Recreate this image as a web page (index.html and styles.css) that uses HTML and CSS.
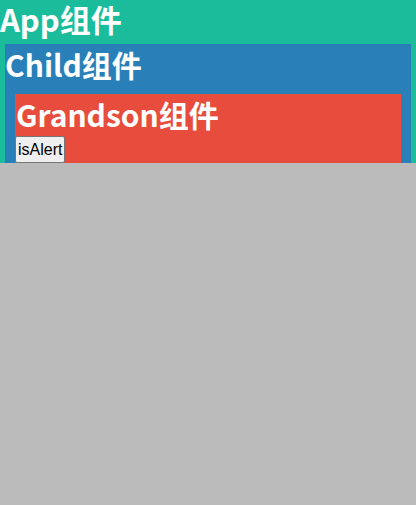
FILE: index.html
```html
<!DOCTYPE html>
<html>
<head>
<meta charset="utf-8">
<link rel="stylesheet" href="styles.css">
</head>
<body>
<div class="app">
  <h1 class="title app-title">App组件</h1>
  <div class="child">
    <h1 class="title">Child组件</h1>
    <div class="grandson">
      <h1 class="title">Grandson组件</h1>
      <button class="btn">isAlert</button>
    </div>
  </div>
</div>
</body>
</html>
```

FILE: styles.css
```css
html, body {
  margin: 0;
  padding: 0;
  background: #bbbbbb;
}
.app {
  height: 163px;
  overflow: hidden;
  background: #1abc9c;
}
.title {
  margin: 0;
  color: #ffffff;
  font-family: "Noto Sans CJK SC", "Noto Sans", sans-serif;
  font-weight: 700;
  font-size: 30px;
  line-height: 40px;
  white-space: nowrap;
}
.app-title {
  font-size: 31px;
  line-height: 37px;
}
.child {
  margin: 7px 5px 0;
  background: #2980b9;
  padding: 0 10px 0 0;
  height: 200px;
}
.grandson {
  margin: 10px 0 0 10px;
  background: #e74c3c;
  height: 200px;
}
.grandson > .title {
  padding-left: 1px;
}
.btn {
  display: block;
  margin: 2px 0 0;
  padding: 1px 2px;
  font-family: "Liberation Sans", Arial, sans-serif;
  font-size: 16px;
  color: #000;
  background: #efefef;
  border: 1px solid #767676;
  border-radius: 2px;
  height: 27px;
}
```
